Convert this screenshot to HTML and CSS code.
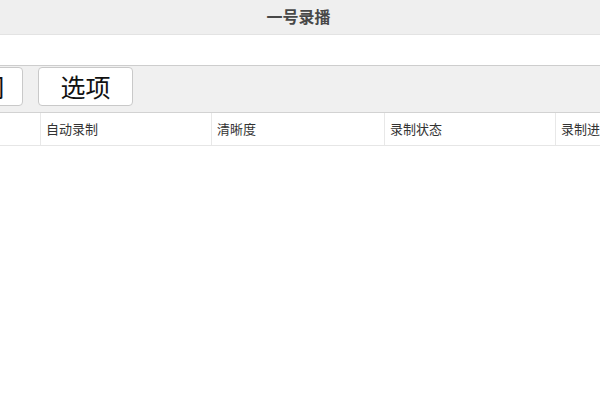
FILE: index.html
```html
<!DOCTYPE html>
<html lang="zh-CN">
<head>
    <meta charset="UTF-8">
    <title>一号录播</title>
    <link rel="stylesheet" href="styles.css">
</head>
<body>
    <div class="window">
        <div class="titlebar">一号录播</div>
        <div class="addr-strip"></div>
        <div class="toolbar">
            <div class="toolbar-inner">
                <button class="tool-btn tool-btn-shift">时间</button>
                <button class="tool-btn">选项</button>
            </div>
        </div>
        <div class="table">
            <div class="table-head">
                <div class="cell cell-first">序号</div>
                <div class="cell">自动录制</div>
                <div class="cell">清晰度</div>
                <div class="cell">录制状态</div>
                <div class="cell">录制进度</div>
            </div>
        </div>
    </div>
</body>
</html>
```

FILE: styles.css
```css
html, body {
    margin: 0;
    padding: 0;
    background: #fff;
    overflow: hidden;
}

.window {
    width: 600px;
    height: 400px;
    overflow: hidden;
    font-family: "Noto Sans CJK SC", "Noto Sans", sans-serif;
    background: #fff;
}

/* 标题栏 */
.titlebar {
    height: 34px;
    line-height: 32px;
    background: #efefef;
    border-bottom: 1px solid #e3e3e3;
    text-align: center;
    font-size: 16px;
    font-weight: bold;
    color: #484848;
    padding-right: 3px;
}

.addr-strip {
    height: 30px;
    background: #fff;
    border-bottom: 1px solid #cdcdcd;
}

/* 工具栏 */
.toolbar {
    height: 46px;
    background: #f0f0f0;
    border-bottom: 1px solid #d2d2d2;
    overflow: hidden;
}

.toolbar-inner {
    display: flex;
    gap: 15px;
    padding-top: 1px;
    margin-left: -72px;
}

.tool-btn {
    width: 95px;
    height: 39px;
    padding: 0;
    background: #fff;
    border: 1px solid #c9c9c9;
    border-radius: 4px;
    font-family: "Noto Sans CJK SC", sans-serif;
    font-size: 25px;
    line-height: 37px;
    color: #111;
}

.tool-btn-shift {
    padding-left: 8px;
}

/* 表头 */
.table-head {
    display: flex;
    height: 32px;
    border-bottom: 1px solid #e6e6e6;
    white-space: nowrap;
}

.cell {
    flex: 0 0 171px;
    box-sizing: border-box;
    padding-left: 5px;
    line-height: 32px;
    font-size: 13px;
    color: #333;
    border-left: 1px solid #e8e8e8;
    overflow: hidden;
}

.cell:nth-child(3) {
    flex-basis: 173px;
}

.cell-first {
    flex: 0 0 40px;
    border-left: none;
    color: transparent;
}
```
